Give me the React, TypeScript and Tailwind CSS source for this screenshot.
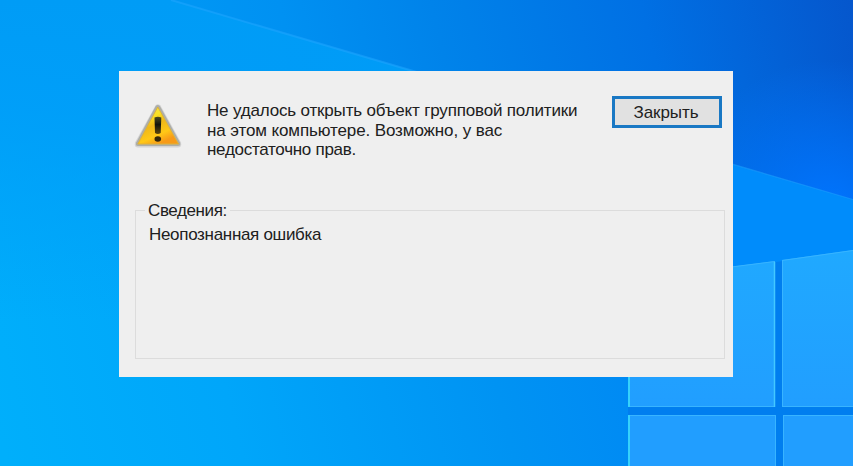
function Wallpaper() {
  return (
    <svg className="absolute inset-0 h-full w-full" viewBox="0 0 853 466" preserveAspectRatio="none" aria-hidden="true">
      <defs>
        <linearGradient id="upper" gradientUnits="userSpaceOnUse" x1="60" y1="200" x2="850" y2="0">
          <stop offset="0" stopColor="#00a1f8" />
          <stop offset="0.32" stopColor="#0091f2" />
          <stop offset="0.5" stopColor="#0083ea" />
          <stop offset="0.75" stopColor="#0070e4" />
          <stop offset="1" stopColor="#0557cd" />
        </linearGradient>
        <linearGradient id="lower" gradientUnits="userSpaceOnUse" x1="0" y1="440" x2="640" y2="280">
          <stop offset="0" stopColor="#00affb" />
          <stop offset="0.35" stopColor="#00a6fa" />
          <stop offset="0.75" stopColor="#0093f3" />
          <stop offset="1" stopColor="#0088f4" />
        </linearGradient>
        <linearGradient id="fade" gradientUnits="userSpaceOnUse" x1="0" y1="0" x2="0" y2="320">
          <stop offset="0" stopColor="#009cf6" />
          <stop offset="0.35" stopColor="#009cf8" stopOpacity="0.8" />
          <stop offset="1" stopColor="#009cf8" stopOpacity="0" />
        </linearGradient>
        <radialGradient id="glow" gradientUnits="userSpaceOnUse" cx="830" cy="210" r="150">
          <stop offset="0" stopColor="#0075ff" />
          <stop offset="1" stopColor="#0075ff" stopOpacity="0" />
        </radialGradient>
        <linearGradient id="right" x1="0" y1="0" x2="0" y2="1">
          <stop offset="0" stopColor="#0085f8" />
          <stop offset="0.3" stopColor="#008fff" />
          <stop offset="1" stopColor="#007bf0" />
        </linearGradient>
        <linearGradient id="pane" gradientUnits="userSpaceOnUse" x1="0" y1="250" x2="0" y2="410">
          <stop offset="0" stopColor="#20a9ff" />
          <stop offset="1" stopColor="#219eff" />
        </linearGradient>
      </defs>
      <rect width="853" height="466" fill="url(#upper)" />
      <rect width="853" height="202" fill="url(#glow)" />
      <path d="M0 0H171L853 200V466H0Z" fill="url(#lower)" />
      <path d="M0 0H171L853 200V320H0Z" fill="url(#fade)" />
      <path d="M733 165L853 200V466H733Z" fill="url(#right)" />
      <path d="M171 0L853 200" stroke="#20a5ff" strokeWidth="2" opacity="0.55" />
      <path d="M628 280L853 250V466H628Z" fill="#007eef" />
      <path d="M733 165V268L853 251V200Z" fill="#008cfb" />
      <g fill="url(#pane)">
        <path d="M628 280L775 261V407H628Z" />
        <path d="M782 260L853 250V407H782Z" />
        <path d="M628 415H776V466H628Z" />
        <path d="M783 415H853V466H783Z" />
      </g>
      <g fill="none" strokeWidth="1" stroke="#38b4ff">
        <path d="M628 406.500H775M628 415.500H776M783 406.500H853M783 415.500H853M782.500 260V407M783.500 415V466M775.500 415V466M628 280L775 261.500M782 260.500L853 250.500" />
      </g>
      <path d="M774.500 262V407" stroke="#43c8ff" strokeWidth="1.500" />
      <path d="M629 377V407M629 415V466" stroke="#35d1fc" strokeWidth="2" />
    </svg>
  );
}

function WarningIcon() {
  return (
    <svg className="h-[44px] w-[48px] shrink-0" viewBox="0 0 48 44" aria-hidden="true">
      <defs>
        <linearGradient id="amber" x1="0" y1="0" x2="0.5" y2="1">
          <stop offset="0" stopColor="#e6e26c" />
          <stop offset="0.35" stopColor="#fbe222" />
          <stop offset="0.55" stopColor="#f0b818" />
          <stop offset="0.8" stopColor="#ffc816" />
          <stop offset="1" stopColor="#f79a18" />
        </linearGradient>
        <linearGradient id="mark" x1="0" y1="0" x2="0" y2="1">
          <stop offset="0" stopColor="#4c4a20" />
          <stop offset="0.45" stopColor="#11140c" />
          <stop offset="1" stopColor="#5d460c" />
        </linearGradient>
      </defs>
      <path d="M21.500 1.500Q23.500 -1 26.500 1.500L47 38.500Q48 43.500 44 43.500H4Q0 43.500 1 38.500Z" fill="#d4d4d4" />
      <path d="M21.700 2Q23.700 0 25.900 2L46 38.500Q47.200 42 43.900 42H4Q1 42 2.200 38.500Z" fill="#adaea8" />
      <path d="M23.800 3L44.500 40H3.800Z" fill="url(#amber)" stroke="#dfb23a" strokeWidth="1" strokeLinejoin="round" />
      <path d="M20.500 13.500Q23.800 12 27.300 13.500L26.700 29Q23.800 31 21 29Z" fill="url(#mark)" />
      <ellipse cx="23.800" cy="35" rx="3.300" ry="2.800" fill="#33270b" />
    </svg>
  );
}

export default function App() {
  return (
    <main className="relative h-[466px] w-[853px] overflow-hidden px-[119px] pt-[71px] font-['Liberation_Sans',Arial,sans-serif] text-[17px] text-[#202020]">
      <Wallpaper />
      <section role="alertdialog" aria-label="Сведения" className="relative flex h-[306px] w-[614px] flex-col bg-[#efefef]">
        <div className="flex h-[130px] items-start pl-[15px] pt-[25px]">
          <div className="pt-[8px]"><WarningIcon /></div>
          <p className="ml-[25px] mt-[5px] w-[405px] whitespace-nowrap leading-[19.500px]">
            <span className="block tracking-[-0.170px]">Не удалось открыть объект групповой политики</span>
            <span className="block tracking-[-0.110px]">на этом компьютере. Возможно, у вас</span>
            <span className="block tracking-[-0.280px]">недостаточно прав.</span>
          </p>
          <button className="flex h-[32px] w-[110px] items-center justify-center border-[3px] border-[#1978c4] bg-[#e1e1e1] pr-[2px] pt-[2px] leading-5 tracking-[-0.050px]">
            <span>Закрыть</span>
          </button>
        </div>
        <fieldset className="ml-[16px] h-[158px] w-[590px] border border-[#dcdcdc] px-[13px]">
          <legend className="-ml-[4px] px-[3px] pt-[2px] leading-4 tracking-[-0.400px]"><span>Сведения:</span></legend>
          <p className="mt-[6px] leading-5 tracking-[-0.310px]"><span>Неопознанная ошибка</span></p>
        </fieldset>
      </section>
    </main>
  );
}
